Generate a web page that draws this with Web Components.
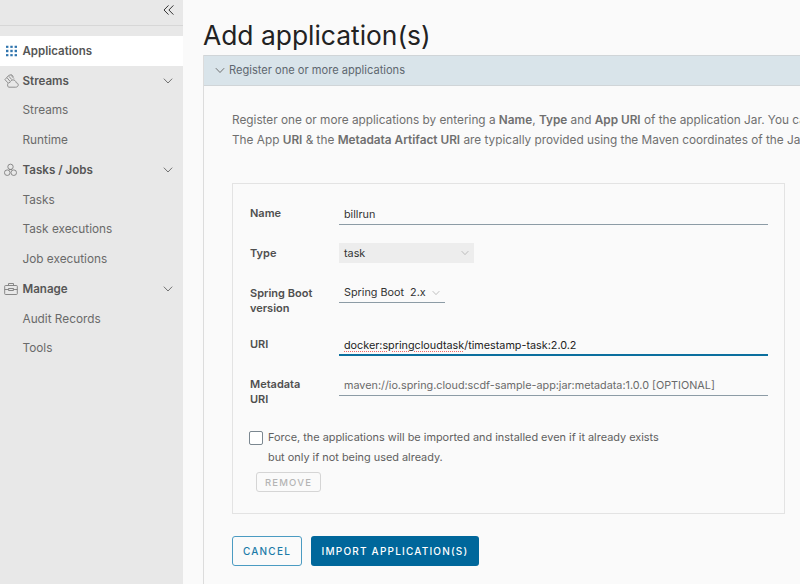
<!DOCTYPE html>
<html lang="en"><head><meta charset="utf-8"><title>Add application(s)</title>
<style>
html,body{margin:0;padding:0;height:100%;overflow:hidden;background:#fafafa}
body{font-family:"Inter","Liberation Sans",sans-serif;color:#565656}
b{font-weight:600}
</style></head><body>
<dm-shell>
  <dm-sidenav slot="nav">
    <dm-navitem active label="Applications" kind="apps"></dm-navitem>
    <dm-navitem group label="Streams" kind="streams"></dm-navitem>
    <dm-navitem label="Streams"></dm-navitem>
    <dm-navitem label="Runtime"></dm-navitem>
    <dm-navitem group label="Tasks / Jobs" kind="tasks"></dm-navitem>
    <dm-navitem label="Tasks"></dm-navitem>
    <dm-navitem label="Task executions"></dm-navitem>
    <dm-navitem label="Job executions"></dm-navitem>
    <dm-navitem group label="Manage" kind="manage"></dm-navitem>
    <dm-navitem label="Audit Records"></dm-navitem>
    <dm-navitem label="Tools"></dm-navitem>
  </dm-sidenav>
  <dm-panel title-text="Register one or more applications">
    <p slot="intro">Register one or more applications by entering a <b>Name</b>, <b>Type</b> and <b>App URI</b> of the application Jar. You can also bulk import applications.<br>The App <b>URI</b> &amp; the <b>Metadata Artifact URI</b> are typically provided using the Maven coordinates of the Jar.</p>
    <dm-formcard>
      <dm-field label="Name"><dm-input value="billrun"></dm-input></dm-field>
      <dm-field label="Type"><dm-select value="task" kind="filled"></dm-select></dm-field>
      <dm-field label="Spring Boot version"><dm-select value="Spring Boot&#160;&#160;2.x" kind="line"></dm-select></dm-field>
      <dm-field label="URI"><dm-input value="docker:springcloudtask/timestamp-task:2.0.2" focus squiggle="docker:springcloudtask"></dm-input></dm-field>
      <dm-field label="Metadata URI"><dm-input value="maven://io.spring.cloud:scdf-sample-app:jar:metadata:1.0.0 [OPTIONAL]" placeholder></dm-input></dm-field>
      <dm-check>Force, the applications will be imported and installed even if it already exists<br>but only if not being used already.</dm-check>
      <dm-button kind="disabled">REMOVE</dm-button>
    </dm-formcard>
    <dm-actions>
      <dm-button kind="outline">CANCEL</dm-button>
      <dm-button kind="primary">IMPORT APPLICATION(S)</dm-button>
    </dm-actions>
  </dm-panel>
</dm-shell>
<script>
const ICONS={
apps:`<svg width="11" height="11" viewBox="0 0 11 11" fill="#2f74ad"><rect x="0" y="0" width="2.4" height="2.4"/><rect x="4.300" y="0" width="2.4" height="2.4"/><rect x="8.600" y="0" width="2.4" height="2.4"/><rect x="0" y="4.300" width="2.4" height="2.4"/><rect x="4.300" y="4.300" width="2.4" height="2.4"/><rect x="8.600" y="4.300" width="2.4" height="2.4"/><rect x="0" y="8.600" width="2.4" height="2.4"/><rect x="4.300" y="8.600" width="2.4" height="2.4"/><rect x="8.600" y="8.600" width="2.4" height="2.4"/></svg>`,
streams:`<svg width="15" height="15" viewBox="0 0 16 16" fill="none" stroke="#8a8a8a" stroke-width="1"><path d="M1 6.500 5 2 8 1.200 10 3.400"/><path d="M1 6.500 4.200 10"/><path d="M3.200 4.500 6.300 8.200"/><path d="M5 2.800 8.200 6.400"/><path d="M7.500 1.800 10.600 5.400"/><path d="M4.800 14.600h7.600c1.600 0 2.800-1 2.800-2.400 0-1.300-1-2.300-2.200-2.400C12.600 8 11.300 6.800 9.600 6.800 8 6.800 6.700 8 6.400 9.500 5 9.500 3.800 10.600 3.800 12c0 1 .3 2 1 2.600z"/></svg>`,
tasks:`<svg width="13" height="14" viewBox="0 0 14 14" fill="none" stroke="#7d7d7d" stroke-width=".95"><circle cx="7" cy="3.600" r="2.900"/><circle cx="3.500" cy="9.900" r="3"/><circle cx="10.500" cy="9.900" r="3"/><path d="M5.500 6.400h3"/></svg>`,
manage:`<svg width="14" height="13" viewBox="0 0 14 13" fill="none" stroke="#7d7d7d" stroke-width=".9"><rect x=".7" y="3" width="12.600" height="9" rx=".8"/><path d="M4.500 3V1h5v2"/><path d="M.7 7h4M9.300 7h4"/><rect x="4.700" y="6" width="4.600" height="2"/></svg>`,
chev:`<svg width="10" height="7" viewBox="0 0 12 8" fill="none" stroke="#666" stroke-width="1.100"><path d="M1 1.200 6 6.400l5-5.200"/></svg>`};
function def(name,css,html){
  customElements.define(name,class extends HTMLElement{
    connectedCallback(){
      if(this.shadowRoot)return;
      const r=this.attachShadow({mode:"open"});
      r.innerHTML=`<style>${css}</style>`+(typeof html==="function"?html(this):html);
    }
  });
}
def("dm-shell",`:host{display:flex;width:800px;height:584px;overflow:hidden;align-items:stretch}`,`<slot name="nav"></slot><slot></slot>`);
def("dm-sidenav",`:host{display:block;width:183px;flex:none;height:584px;background:#e8e8e8;box-sizing:border-box}
.top{height:19px;padding:0 9.500px 6px 0;border-bottom:1px solid #d7d7d7;display:flex;justify-content:flex-end;align-items:center;margin-bottom:10px;box-sizing:content-box}
`,`<div class="top"><svg width="11" height="10" viewBox="0 0 11 10" fill="none" stroke="#333" stroke-width="1"><path d="M5.500.4 1 5l4.500 4.600M10.400.4 5.900 5l4.500 4.600"/></svg></div><slot></slot>`);
def("dm-navitem",`:host{display:flex;align-items:center;height:29.750px;font-size:11.800px;color:#6a6a6a;padding-left:22.500px;position:relative;white-space:nowrap}
:host([active]){background:#fff;color:#565656;font-weight:600;font-size:11.500px}
:host([group]){font-weight:600;color:#565656;font-size:11.600px}
.ic{position:absolute;left:4px;top:50%;transform:translateY(-50%);display:flex}
:host([active]) .ic{left:5.500px}
.ch{position:absolute;left:163px;top:50%;transform:translateY(-50%);display:flex}`,
 e=>{const k=e.getAttribute("kind");return (k?`<span class="ic">${ICONS[k]}</span>`:"")+`<span>${e.getAttribute("label")}</span>`+(e.hasAttribute("group")?`<span class="ch">${ICONS.chev}</span>`:"")});
def("dm-panel",`:host{display:block;flex:none;width:640px;padding:18px 0 0 20px;box-sizing:content-box}
h1{margin:0;font-weight:400;font-size:26.400px;line-height:34px;color:#222;height:37px;white-space:nowrap}
.box{width:640px;border-left:1px solid #dcdcdc;height:600px;box-sizing:border-box}
.hd{height:31px;box-sizing:border-box;background:#d9e4ea;border-top:1px solid #d0d5d8;border-bottom:1px solid #d0d5d8;display:flex;align-items:center;gap:4px;padding:0 0 1px 11px;font-size:11.100px;color:#5e6770;white-space:nowrap}
.bd{padding:24px 0 0 28px}
::slotted(p){margin:0 0 33px;font-size:11.800px;line-height:20px;color:#6f6f6f;white-space:nowrap}`,
 e=>`<h1>Add application(s)</h1><div class="box"><div class="hd">${ICONS.chev}<span>${e.getAttribute("title-text")}</span></div><div class="bd"><slot name="intro"></slot><slot></slot></div></div>`);
def("dm-formcard",`:host{display:block;width:553px;height:331px;box-sizing:border-box;border:1px solid #e3e3e3;padding:9px 16px 0 17px}`,`<slot></slot>`);
def("dm-field",`:host{display:grid;grid-template-columns:89px 1fr;align-items:start;min-height:40px;font-size:11px}
.l{font-weight:600;color:#4f4f4f;line-height:15px;padding:13px 0 8px;width:64px}
.c{padding-top:8px;position:relative}`,e=>`<div class="l">${e.getAttribute("label")}</div><div class="c"><slot></slot></div>`);
def("dm-input",`:host{display:block;height:24px;border-bottom:1px solid #8c9ba5;box-sizing:border-box;font-size:10.800px;line-height:27px;color:#333;padding-left:5px;white-space:nowrap}
:host([focus]){border-bottom:2px solid #0b6f9e;color:#222}
:host([placeholder]){color:#6a6a6a}
.s{text-decoration:underline dotted #e66 1px;text-underline-offset:2px}`,
 e=>{const v=e.getAttribute("value"),s=e.getAttribute("squiggle");return s?`<span class="s">${s}</span>${v.slice(s.length)}`:v});
def("dm-select",`:host{display:inline-flex;align-items:center;justify-content:space-between;box-sizing:border-box;height:20px;font-size:10.800px;color:#333;padding:0 5px;white-space:nowrap;margin-top:2px}
:host([kind=filled]){width:135px;background:#ededed}
:host([kind=line]){width:106px;border-bottom:1px solid #8c9ba5}
svg{flex:none}`,
 e=>`<span>${e.getAttribute("value")}</span>${ICONS.chev.replace('width="10"','width="8"').replace('height="7"','height="6"').replace('#666','#aaa')}`);
def("dm-check",`:host{display:flex;gap:5px;font-size:10.900px;line-height:19.500px;color:#606060;margin:13px 0 0 -1px;white-space:nowrap}
.b{width:12px;height:12px;border:1px solid #7b8790;border-radius:2px;background:#fff;flex:none;margin-top:3px}`,`<span class="b"></span><span><slot></slot></span>`);
def("dm-button",`:host{display:inline-flex;align-items:center;justify-content:center;box-sizing:border-box;font-size:10px;font-weight:500;letter-spacing:1.200px;border-radius:3px;white-space:nowrap}
:host([kind=disabled]){width:65px;height:20px;border:1px solid #d5d5d5;color:#b5b5b5;margin:5px 0 0 6px;font-size:9.500px}
:host([kind=outline]){width:70px;height:30px;border:1px solid #4b9bc2;color:#1c7aa8}
:host([kind=primary]){width:168px;height:30px;background:#00679b;color:#fff}`,`<slot></slot>`);
def("dm-actions",`:host{display:flex;gap:9px;margin-top:22px}`,`<slot></slot>`);
</script>
</body></html>
